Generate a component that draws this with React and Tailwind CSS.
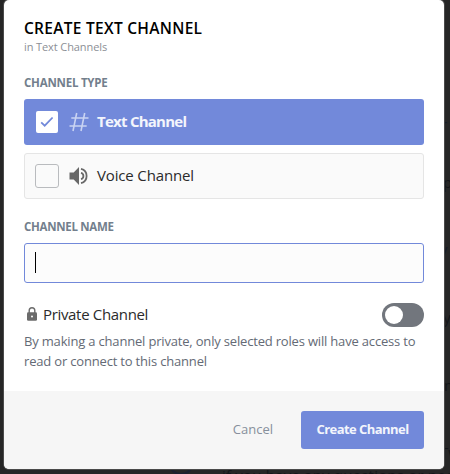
import React from "react";

function Hash() {
  return (
    <svg width="20" height="20" viewBox="0 0 20 20" fill="none" stroke="#c9d3f2" strokeWidth="1.6">
      <path d="M7.7 1 L4 19 M15.7 1 L12 19 M2.3 6 H19.5 M0.5 14 H17.7" />
    </svg>
  );
}

function Speaker() {
  return (
    <svg width="20" height="20" viewBox="0 0 20 20" fill="none">
      <path d="M0.5 6.5 H4.7 L10 1 V19 L4.7 13.5 H0.5 Z" fill="#686868" />
      <path d="M12 6.9 A3.2 3.2 0 0 1 12 13.1" stroke="#686868" strokeWidth="1.8" />
      <path d="M12 2.9 A7.3 7.3 0 0 1 12 17.1" stroke="#686868" strokeWidth="1.8" />
    </svg>
  );
}

function Lock() {
  return (
    <svg width="10" height="14" viewBox="0 0 10 14" className="shrink-0">
      <path d="M2.2 6 V3.6 A2.8 2.8 0 0 1 7.8 3.6 V6" fill="none" stroke="#6b6b6b" strokeWidth="1.4" />
      <rect x="0" y="5.2" width="10" height="8.6" rx="1.3" fill="#6b6b6b" />
      <circle cx="5" cy="9.5" r="1" fill="#fff" />
    </svg>
  );
}

// Dimmed page text that shows past the dialog's right and bottom edges.
function Backdrop() {
  return (
    <div className="absolute inset-0 whitespace-nowrap text-[15px] leading-5 text-[#131518]">
      <span className="absolute top-[114px] left-[441px] text-[#141b26]">r</span>
      <span className="absolute top-[172px] left-[443px]">p</span>
      <span className="absolute top-[239px] left-[440px] text-[#141b26]">y</span>
      <span className="absolute top-[307px] left-[434px]">by</span>
      <span className="absolute top-[375px] left-[444px]">m</span>
      <span className="absolute top-[442px] left-[440px]">Tw</span>
      <span className="absolute top-[465px] left-[222px] tracking-[0.2px]">if you have any questions or need h</span>
      <span className="absolute top-[449px] left-[168px] size-[26px] rounded-full border-2 border-[#1b2030]" />
    </div>
  );
}

export default function App() {
  return (
    <div className="relative h-[474px] w-[450px] overflow-hidden bg-[#262626] pl-1 font-['Open_Sans',sans-serif]">
      <Backdrop />
      <div className="relative flex h-[469px] w-[440px] flex-col overflow-hidden rounded-[5px] bg-white shadow-[0_0_0_1px_#4a4a4a]">
        <div className="flex h-[391px] flex-col px-5 pt-[18px]">
          <h1 className="h-5 whitespace-nowrap text-[15.5px] leading-[21px] font-semibold tracking-[0.28px] text-black">CREATE TEXT CHANNEL</h1>
          <p className="h-4 whitespace-nowrap text-[11px] leading-[18px] tracking-[-0.1px] text-[#8c8f96]">in Text Channels</p>
          <h2 className="mt-[21px] h-4 whitespace-nowrap text-[11.5px] leading-[15px] font-bold tracking-[-0.22px] text-[#737f8d]">CHANNEL TYPE</h2>
          <div className="mt-2 flex h-[46px] shrink-0 items-center rounded-[3px] bg-[#7289da] pl-3">
            <span className="flex size-[22px] items-center justify-center rounded-xs bg-white">
              <svg width="14" height="12" viewBox="0 0 14 12" fill="none" stroke="#7289da" strokeWidth="1.8">
                <path d="M1.2 6.3 L4.7 9.7 L12.6 1.5" />
              </svg>
            </span>
            <span className="ml-[11px]"><Hash /></span>
            <span className="ml-2 -mt-0.5 whitespace-nowrap text-[15px] leading-5 font-bold tracking-[-0.75px] text-[#f3f5fc]">Text Channel</span>
          </div>
          <div className="mt-2 flex h-[46px] shrink-0 items-center rounded-[3px] border border-[#e5e5e5] bg-[#fafafa] pl-2.5">
            <span className="size-6 rounded-[3px] border border-[#b9bbbe]" />
            <span className="ml-2.5"><Speaker /></span>
            <span className="ml-2 -mt-0.5 whitespace-nowrap text-[15px] leading-5 tracking-[-0.15px] text-[#2b2b2b]">Voice Channel</span>
          </div>
          <h2 className="mt-5 h-4 whitespace-nowrap text-[11.5px] leading-[15px] font-bold tracking-[-0.3px] text-[#737f8d]">CHANNEL NAME</h2>
          <div className="mt-2 flex h-10 shrink-0 items-center rounded-[3px] border border-[#7289da] bg-[#fcfcfc] pl-2.5">
            <span className="h-[21px] w-px -translate-y-px bg-black" />
          </div>
          <div className="mt-5 flex h-6 items-center">
            <span className="ml-[3px] -mt-0.5"><Lock /></span>
            <span className="-mt-0.5 ml-1.5 flex-1 whitespace-nowrap text-[15px] leading-6 tracking-[-0.33px] text-[#2b2b2b]">Private Channel</span>
            <span className="flex h-6 w-[42px] items-center rounded-full bg-[#72767d] pl-[3px]">
              <span className="size-[18px] rounded-full bg-white" />
            </span>
          </div>
          <p className="mt-1 whitespace-nowrap text-[13px] leading-5 tracking-[-0.18px] text-[#646a75]">
            By making a channel private, only selected roles will have access to<br />read or connect to this channel
          </p>
        </div>
        <div className="flex flex-1 items-center justify-end bg-[#f6f6f6] pr-5">
          <span className="mr-7 whitespace-nowrap text-[13px] text-[#87909c]">Cancel</span>
          <span className="flex h-[38px] w-[123px] items-center justify-center rounded-[3px] bg-[#7289da] whitespace-nowrap text-[13px] font-bold tracking-[-0.55px] text-[#f3f5fc]">Create Channel</span>
        </div>
      </div>
    </div>
  );
}
